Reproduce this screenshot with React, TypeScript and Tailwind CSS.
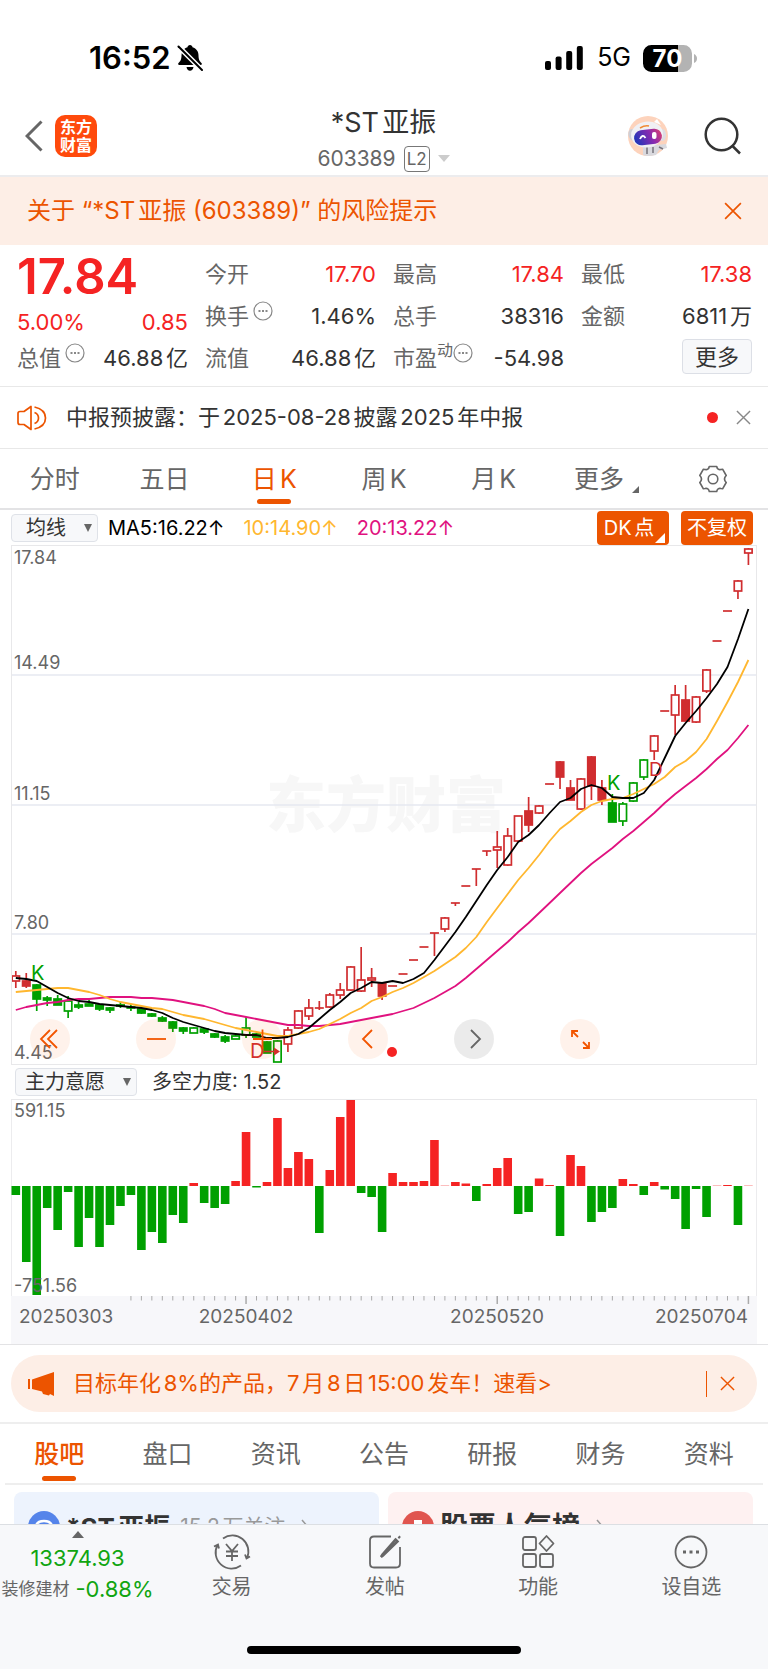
import React, { useState } from 'react';
import { clsx } from 'clsx';

const RED = '#d02d2f';
const GREEN = '#00a000';
const X0 = 15.8;
const STEP = 10.466;

const xAt = (i: number) => X0 + i * STEP;

// kind: r / g hollow, R / G filled, then high, body top, body bottom, low
type Candle = ['r' | 'g' | 'R' | 'G', number, number, number, number];

const candles: Candle[] = [
  ['r', 971, 976, 981, 988], ['R', 973, 981, 986, 988], ['G', 984, 985, 999, 1011], ['G', 996, 998, 1000, 1006],
  ['G', 995, 999, 1005, 1005], ['g', 996, 1001, 1011, 1018], ['G', 1002, 1005, 1007, 1009], ['G', 1000, 1004, 1006, 1006],
  ['G', 1004, 1005, 1009, 1011], ['G', 1007, 1008, 1010, 1013], ['G', 1002, 1005, 1006, 1008], ['G', 1004, 1007, 1008, 1011],
  ['G', 1008, 1009, 1013, 1014], ['G', 1013, 1014, 1016, 1017], ['G', 1016, 1018, 1021, 1022], ['G', 1021, 1022, 1028, 1032],
  ['G', 1027, 1028, 1031, 1034], ['g', 1027, 1028, 1033, 1033], ['G', 1028, 1029, 1032, 1034], ['G', 1033, 1034, 1037, 1038],
  ['G', 1035, 1037, 1041, 1043], ['g', 1035, 1036, 1039, 1039], ['g', 1017, 1028, 1035, 1038], ['G', 1033, 1034, 1037, 1037],
  ['G', 1041, 1042, 1053, 1053], ['g', 1040, 1041, 1062, 1062], ['r', 1027, 1030, 1044, 1052], ['r', 1010, 1011, 1028, 1029],
  ['r', 999, 1008, 1016, 1020], ['r', 1001, 1008, 1008, 1010], ['r', 993, 995, 1007, 1008], ['r', 983, 990, 995, 999],
  ['r', 966, 967, 990, 991], ['r', 947, 980, 991, 992], ['r', 968, 978, 980, 987], ['R', 982, 983, 996, 1000],
  ['r', 986, 986, 986, 986], ['r', 974, 974, 974, 974], ['r', 960, 960, 960, 960], ['r', 947, 947, 947, 947],
  ['r', 933, 933, 933, 956], ['r', 917, 918, 929, 932], ['r', 903, 903, 903, 906], ['r', 886, 886, 886, 886],
  ['r', 869, 869, 869, 886], ['r', 851, 851, 851, 856], ['r', 831, 847, 850, 868], ['r', 828, 836, 865, 866],
  ['r', 816, 816, 841, 842], ['R', 797, 811, 825, 832], ['r', 805, 806, 813, 814], ['r', 784, 784, 784, 784],
  ['R', 761, 762, 777, 789], ['R', 780, 788, 800, 800], ['r', 778, 779, 809, 810], ['R', 756, 757, 786, 800],
  ['R', 780, 788, 800, 805], ['G', 794, 803, 822, 822], ['g', 802, 804, 821, 826], ['g', 782, 783, 801, 802],
  ['g', 759, 760, 777, 780], ['r', 735, 736, 751, 760], ['r', 711, 711, 711, 711], ['r', 685, 695, 715, 735],
  ['R', 685, 700, 721, 721], ['r', 696, 697, 722, 723], ['r', 669, 670, 691, 693], ['r', 641, 641, 641, 641],
  ['r', 611, 611, 611, 611], ['r', 580, 581, 591, 599], ['r', 548, 549, 553, 565],
];

const ma5 = [
  978, 979, 981, 987, 993, 998, 1001, 1002, 1004, 1005, 1006, 1007, 1008, 1010, 1013, 1018, 1022, 1025, 1028, 1031, 1033, 1034, 1035,
  1035, 1038, 1038, 1037, 1034, 1028, 1019, 1010, 1002, 993, 988, 982, 983, 981, 983, 979, 973, 960, 946, 932, 917, 901, 885, 870,
  857, 842, 835, 825, 813, 802, 798, 789, 785, 788, 797, 798, 798, 793, 780, 758, 736, 723, 711, 698, 684, 667, 639, 609,
];

const ma10 = [
  992, 991, 990, 989, 988, 988, 990, 992, 995, 999, 1002, 1004, 1006, 1008, 1009, 1012, 1015, 1017, 1019, 1022, 1025, 1028, 1030,
  1032, 1034, 1036, 1036, 1034, 1032, 1029, 1024, 1019, 1013, 1008, 1001, 997, 992, 988, 983, 977, 971, 964, 957, 948, 937, 922, 908,
  894, 880, 868, 855, 841, 829, 821, 812, 805, 801, 799, 798, 794, 789, 784, 777, 767, 761, 752, 739, 721, 702, 682, 660,
];

const ma20 = [
  1010, 1007, 1005, 1003, 1002, 1000, 999, 999, 998, 997, 997, 997, 998, 998, 999, 1000, 1002, 1004, 1006, 1009, 1013, 1015, 1017,
  1019, 1021, 1023, 1025, 1025, 1026, 1026, 1025, 1024, 1022, 1020, 1018, 1016, 1014, 1011, 1008, 1003, 998, 992, 986, 978, 969, 960,
  951, 942, 932, 923, 913, 903, 893, 883, 873, 864, 856, 848, 839, 831, 822, 813, 803, 794, 786, 778, 769, 759, 750, 738, 725,
];

const flows = [
  -9, -76, -109, -22, -44, -6, -61, -32, -61, -39, -20, -9, -64, -46, -57, -29, -37, 3, -17, -22, -18, 5, 54, -1.5, 4, 68, 18, 34, 27,
  -47, 16, 69, 86, -7, -11, -46, 13, 4, 4, 5, 46, 0.3, 4, 2.5, -15, 2, 18, 28, -28, -26, 7.5, 1, -50, 31, 20, -36, -26, -22, 7, 2,
  -9, 4, -3.5, -13, -43, -3, -31, 0.3, 1, -39, 0.3,
];

const toPoints = (ys: number[]) => ys.map((y, i) => `${xAt(i).toFixed(1)},${y}`).join(' ');

const CandleShape: React.FC<{ data: Candle; index: number }> = ({ data, index }) => {
  const [kind, high, top, bottom, low] = data;
  const color = kind.toLowerCase() === 'r' ? RED : GREEN;
  const filled = kind === 'R' || kind === 'G';
  const x = xAt(index);
  return (
    <g stroke={color} strokeWidth={1.7}>
      {high < top && <line x1={x} x2={x} y1={high} y2={top} />}
      {low > bottom && <line x1={x} x2={x} y1={bottom} y2={low} />}
      {bottom === top ? (
        <line x1={x - 4.5} x2={x + 4.5} y1={top} y2={top} />
      ) : (
        <rect x={x - 3.7} y={top} width={7.4} height={bottom - top} fill={filled ? color : 'white'} />
      )}
    </g>
  );
};

const KLineChart: React.FC = () => (
  <svg viewBox="11 545 746 520" className="block w-full font-[Inter]">
    <text x="386" y="827" textAnchor="middle" fontSize="60" fontWeight="900" fill="#f7f7f7" fontFamily="Noto Sans CJK SC">东方财富</text>
    {[675, 805, 934].map((y) => (
      <line key={y} x1="11" x2="757" y1={y} y2={y} stroke="#e6e9f0" strokeWidth="1.3" />
    ))}
    {candles.map((c, i) => <CandleShape key={i} data={c} index={i} />)}
    <g fill="none" strokeWidth="1.8" strokeLinejoin="round">
      <polyline points={toPoints(ma20)} stroke="#e0127f" />
      <polyline points={toPoints(ma10)} stroke="#ffb72f" />
      <polyline points={toPoints(ma5)} stroke="#000" />
    </g>
    <g fontSize="20">
      <text x="31" y="980" fill={GREEN}>K</text>
      <text x="607" y="790" fill={GREEN}>K</text>
      <text x="250" y="1058" fill={RED}>D</text>
      <text x="649" y="776" fill={RED} fontSize="19">D</text>
    </g>
    <path d="M264 1051.500h14" stroke={RED} strokeWidth="1.500" />
    <path d="M274 1047.500l6 4-6 4z" fill={RED} />
    <g fontSize="18" fill="#666">
      <text x="14" y="564">17.84</text>
      <text x="14" y="669">14.49</text>
      <text x="14" y="800">11.15</text>
      <text x="14" y="929">7.80</text>
      <text x="14" y="1059">4.45</text>
    </g>
  </svg>
);

const FlowChart: React.FC = () => (
  <svg viewBox="11 1100 746 244" className="block w-full font-[Inter]">
    <rect x="11" y="1296" width="746" height="48" fill="#f7f7fa" />
    {flows.map((v, i) => (
      <rect
        key={i}
        x={xAt(i) - 4.3}
        y={v > 0 ? 1186 - v : 1186}
        width="8.6"
        height={Math.abs(v)}
        fill={v > 0 ? '#f52323' : GREEN}
      />
    ))}
    {flows.map((_, i) => {
      if (i < 11) return null;
      const major = i === 22 || i === 46 || i === 70;
      return <line key={i} x1={xAt(i)} x2={xAt(i)} y1="1296" y2={major ? 1304 : 1300.5} stroke="#aaa" strokeWidth={major ? 1.5 : 1} />;
    })}
    <g fontSize="18" fill="#666">
      <text x="14" y="1117">591.15</text>
      <text x="14" y="1292">-751.56</text>
    </g>
    <g fontSize="19" fill="#666">
      <text x="19" y="1323">20250303</text>
      <text x="246" y="1323" textAnchor="middle">20250402</text>
      <text x="497" y="1323" textAnchor="middle">20250520</text>
      <text x="748" y="1323" textAnchor="end">20250704</text>
    </g>
  </svg>
);

const DotsIcon: React.FC = () => (
  <svg viewBox="0 0 20 20" className="h-5 w-5 shrink-0" fill="none" stroke="#888">
    <circle cx="10" cy="10" r="9" strokeWidth="1.2" />
    <path d="M5.500 10h2M9 10h2M12.500 10h2" strokeWidth="1.800" />
  </svg>
);

const CloseIcon: React.FC<{ className: string }> = ({ className }) => (
  <svg viewBox="0 0 16 16" className={className} fill="none" stroke="currentColor" strokeWidth="1.5">
    <path d="M1 1l14 14M15 1L1 15" />
  </svg>
);

const StatusBar: React.FC = () => (
  <div className="flex h-24 items-center justify-between pt-5 pr-[71px] pl-[89px]">
    <div className="flex items-center gap-1.5">
      <span className="text-[31px] font-semibold text-black">16:52</span>
      <svg viewBox="0 0 26 26" className="h-[26px] w-[26px]">
        <path d="M13 0c1.500 0 2.300 1 2.500 2.200 4 1.200 6 4.500 6 8.300 0 4.500 1.500 6 3 7.500.8.800.3 2-.8 2H2.300c-1.100 0-1.600-1.200-.8-2 1.500-1.500 3-3 3-7.500 0-3.800 2-7.100 6-8.300C10.700 1 11.500 0 13 0zM9.500 22h7c-.3 2.300-1.700 3.800-3.500 3.800S9.800 24.300 9.500 22z" />
        <path d="M1.500 1.500L25 25" stroke="#fff" strokeWidth="5" />
        <path d="M1.500 1.500L25 25" stroke="#000" strokeWidth="2" strokeLinecap="round" />
      </svg>
    </div>
    <div className="flex items-center text-black">
      <svg viewBox="0 0 38 24" className="mr-3.5 h-6 w-[38px]">
        <rect y="15" width="6" height="9" rx="2" />
        <rect x="10.600" y="10.500" width="6" height="13.500" rx="2" />
        <rect x="21.200" y="5" width="6" height="19" rx="2" />
        <rect x="31.800" width="6" height="24" rx="2" />
      </svg>
      <span className="mr-3 text-[25px]">5G</span>
      <svg viewBox="0 0 54 27" className="h-[27px] w-[54px]">
        <path d="M8.500 0H35v27H8.500A8.500 8.500 0 0 1 0 18.500v-10A8.500 8.500 0 0 1 8.500 0z" />
        <path d="M35 0h5.500A8.500 8.500 0 0 1 49 8.500v10a8.500 8.500 0 0 1-8.500 8.500H35zM51 9q3 1.500 3 4.500T51 18z" fill="#b3b3b3" />
        <text x="24.500" y="22" textAnchor="middle" fontSize="24" fontWeight="700" fill="#fff">70</text>
      </svg>
    </div>
  </div>
);

const Header: React.FC = () => (
  <header className="grid h-[81px] grid-cols-3 items-center border-b-2 border-[#ececee] pr-[26px] pl-[25px]">
    <div className="flex items-center gap-3">
      <button aria-label="返回">
        <svg viewBox="0 0 18 32" className="h-8 w-[18px]" fill="none" stroke="#666" strokeWidth="3">
          <path d="M16.500 1.500L2 16l14.500 14.500" />
        </svg>
      </button>
      <div className="grid h-[42px] w-[42px] content-center justify-center rounded-[10px] bg-[#ff4a0c] text-center text-[16px] leading-[18px] font-bold text-white">
        <span>东方</span>
        <span>财富</span>
      </div>
    </div>
    <div className="flex flex-col items-center gap-1 pt-1.5">
      <h1 className="text-[27px] leading-9 text-[#333]">*ST亚振</h1>
      <div className="flex items-center gap-2 text-[21px] leading-7 text-[#666]">
        <span>603389</span>
        <span className="rounded-sm border border-[#777] px-0.5 text-[17px] leading-6">L2</span>
        <svg viewBox="0 0 12 7" className="h-[7px] w-3" fill="#ccc">
          <path d="M0 0h12L6 7z" />
        </svg>
      </div>
    </div>
    <div className="flex items-center justify-end gap-9">
      <button aria-label="智能助手">
        <svg viewBox="0 0 40 40" className="h-10 w-10">
          <defs>
            <linearGradient id="visor" x1="0" x2="1" y1="0.200" y2="0">
              <stop offset="0" stopColor="#2a35b8" />
              <stop offset="0.550" stopColor="#8a2ab0" />
              <stop offset="1" stopColor="#e0406a" />
            </linearGradient>
          </defs>
          <circle cx="20" cy="20" r="20" fill="#fdd3bc" />
          <path d="M15 29h13l10-1 1 4-8 2-3 5q-8 2-13 0z" fill="#d9d9de" />
          <path d="M19 31v7M25 31v6M31 31l4 2" stroke="#77747c" strokeWidth="1.500" />
          <path d="M26 6l3-3 4 6z" fill="#fff" />
          <ellipse cx="4.500" cy="19" rx="4" ry="6" fill="#cfcfd6" transform="rotate(-15 4.500 19)" />
          <ellipse cx="34.500" cy="19" rx="3.500" ry="6" fill="#dcdce2" />
          <ellipse cx="19" cy="18.500" rx="16" ry="13" fill="#f0f0f4" transform="rotate(-8 19 18.500)" />
          <rect x="6" y="13.500" width="28" height="15" rx="7.500" fill="url(#visor)" transform="rotate(-7 20 21)" />
          <path d="M12 23q2.500-5.500 5.500-1" fill="none" stroke="#fff" strokeWidth="1.800" />
          <rect x="24" y="16" width="4.500" height="7" rx="2" fill="#fff" />
          <path d="M12 12q5-3 9-2" fill="none" stroke="#f08a35" strokeWidth="1.500" />
        </svg>
      </button>
      <button aria-label="搜索">
        <svg viewBox="0 0 38 38" className="h-[38px] w-[38px]" fill="none" stroke="#333" strokeWidth="2.500">
          <circle cx="17.500" cy="17.500" r="15.800" />
          <path d="M28 28.500l8 8" />
        </svg>
      </button>
    </div>
  </header>
);

interface QuoteItemProps {
  label: string;
  sup?: string;
  value: string;
  red?: boolean;
  dots?: boolean;
}

const QuoteItem: React.FC<QuoteItemProps> = ({ label, sup, value, red, dots }) => (
  <div className="flex h-[42px] items-center justify-between text-[22px] whitespace-nowrap">
    <div className="flex items-center text-[#666]">
      <span>{label}</span>
      {sup && <span className="mb-4 text-base leading-5">{sup}</span>}
      {dots && <span className={clsx('mb-2.5', !sup && 'ml-1')}><DotsIcon /></span>}
    </div>
    <span className={red ? 'text-[#f52323]' : 'text-[#333]'}>{value}</span>
  </div>
);

const Quote: React.FC = () => (
  <section className="grid h-[142px] grid-cols-4 gap-x-[17px] border-b border-[#e8e8e8] pt-2 pr-4 pl-[17px]">
    <div>
      <div className="flex h-12 items-center text-[49px] font-semibold text-[#f52323]">17.84</div>
      <div className="flex h-9 items-center justify-between pt-1.5 text-[22px] text-[#f52323]">
        <span>5.00%</span>
        <span>0.85</span>
      </div>
      <QuoteItem label="总值" value="46.88亿" dots />
    </div>
    <div>
      <QuoteItem label="今开" value="17.70" red />
      <QuoteItem label="换手" value="1.46%" dots />
      <QuoteItem label="流值" value="46.88亿" />
    </div>
    <div>
      <QuoteItem label="最高" value="17.84" red />
      <QuoteItem label="总手" value="38316" />
      <QuoteItem label="市盈" sup="动" value="-54.98" dots />
    </div>
    <div>
      <QuoteItem label="最低" value="17.38" red />
      <QuoteItem label="金额" value="6811万" />
      <div className="flex justify-end pt-0.5">
        <button className="h-[35px] rounded-sm border border-[#dcdfe6] bg-[#f7f8fa] px-3 text-[22px] leading-8 text-[#333]">更多</button>
      </div>
    </div>
  </section>
);

const periods = ['分时', '五日', '日K', '周K', '月K', '更多'];

const PeriodTabs: React.FC = () => {
  const [active, setActive] = useState('日K');
  return (
    <nav className="grid h-[61px] grid-cols-7 border-b-2 border-[#e3e3e5]">
      {periods.map((p) => (
        <button
          key={p}
          onClick={() => setActive(p)}
          className={clsx('relative flex items-center justify-center pt-0.5 text-[25px]', p === active ? 'text-[#ec5400]' : 'text-[#666]')}
        >
          {p}
          {p === '更多' && (
            <svg viewBox="0 0 7 7" className="mt-5 -mr-1.5 ml-2 h-[7px] w-[7px]" fill="#666"><path d="M7 0v7H0z" /></svg>
          )}
          {p === active && <span className="absolute bottom-1 h-[5px] w-[34px] rounded-sm bg-[#ec5400]" />}
        </button>
      ))}
      <button aria-label="设置" className="flex items-center justify-center">
        <svg viewBox="0 0 28 28" className="h-7 w-7" fill="none" stroke="#666" strokeWidth="1.600">
          <path d="M10.300 1.500h7.400q.8 3.800 4.300 3l1.600-.3 3.600 6.300q-3.400 3.500 0 7l-3.600 6.300-1.600-.3q-3.500-.8-4.300 3h-7.400q-.8-3.800-4.300-3l-1.600.3L.8 17.500q3.400-3.500 0-7l3.600-6.300 1.600.3q3.500.8 4.300-3z" strokeLinejoin="round" />
          <circle cx="14" cy="14" r="4.800" />
        </svg>
      </button>
    </nav>
  );
};

const PillSelect: React.FC<{ label: string; value: string; className: string }> = ({ label, value, className }) => (
  <div className={clsx('relative flex h-7 items-center rounded-sm border border-[#dfe2e8] bg-[#f7f8fa]', className)}>
    <select aria-label={label} className="h-full w-full appearance-none bg-transparent text-xl leading-6 text-[#333]">
      <option>{value}</option>
    </select>
    <svg viewBox="0 0 8 8" className="pointer-events-none absolute right-[5px] h-2 w-2" fill="#666"><path d="M0 0h8L4 8z" /></svg>
  </div>
);

const Round: React.FC<{ label: string; d: string; grey?: boolean }> = ({ label, d, grey }) => (
  <button
    aria-label={label}
    className={clsx('h-10 w-10 rounded-full', grey ? 'bg-black/8 text-[#666]' : 'bg-[#ff5a00]/8 text-[#f25500]')}
  >
    <svg viewBox="0 0 40 40" className="h-10 w-10" fill="none" stroke="currentColor" strokeWidth="1.800">
      <path d={d} />
    </svg>
  </button>
);

const infoTabs = ['股吧', '盘口', '资讯', '公告', '研报', '财务', '资料'];

const InfoTabs: React.FC = () => {
  const [active, setActive] = useState('股吧');
  return (
    <nav className="mx-[5px] grid h-[61px] grid-cols-7 border-b-2 border-[#eee]">
      {infoTabs.map((t) => (
        <button
          key={t}
          onClick={() => setActive(t)}
          className={clsx('relative flex items-center justify-center pt-0.5 text-[25px]', t === active ? 'font-medium text-[#ec5400]' : 'text-[#666]')}
        >
          {t}
          {t === active && <span className="absolute bottom-0.5 h-[5px] w-[34px] rounded-sm bg-[#ec5400]" />}
        </button>
      ))}
    </nav>
  );
};

const NavItem: React.FC<{ label: string; children: React.ReactNode }> = ({ label, children }) => (
  <button className="flex flex-1 flex-col items-center pt-2 text-xl leading-8 text-[#666]">
    <svg viewBox="0 0 38 38" className="h-[38px] w-[38px]" fill="none" stroke="#666" strokeWidth="1.800">{children}</svg>
    {label}
  </button>
);

const App: React.FC = () => (
  <div className="w-full overflow-hidden bg-white font-[Inter,'Noto_Sans_CJK_SC',sans-serif] [text-autospace:normal]">
    <StatusBar />
    <Header />

    <div className="flex h-[68px] items-center justify-between bg-[#fdeee6] pr-[26px] pl-[27px] text-2xl text-[#ec5400]">
      <span>关于 “*ST亚振 (603389)” 的风险提示</span>
      <button aria-label="关闭"><CloseIcon className="h-[18px] w-[18px]" /></button>
    </div>

    <Quote />

    <div className="flex h-[62px] items-center border-b border-[#e8e8e8] pr-[17px] pl-[17px]">
      <svg viewBox="0 0 30 26" className="h-[26px] w-[30px]" fill="none" stroke="#ec5400" strokeWidth="1.700">
        <path d="M14 1.500v23L7 19.500H3Q1 19.500 1 17.500v-9q0-2 2-2h4z" strokeLinejoin="round" />
        <path d="M17.500 7.500q4 1.500 4 5.500t-4 5.500M17.500 2q11 2.500 11 11t-11 11" />
      </svg>
      <span className="ml-[19px] flex-1 text-[22px] text-[#333]">中报预披露：于2025-08-28披露2025年中报</span>
      <span className="h-[11px] w-[11px] rounded-full bg-[#f52323]" />
      <button aria-label="关闭公告" className="ml-[18px] text-[#888]"><CloseIcon className="h-[15px] w-[15px]" /></button>
    </div>

    <PeriodTabs />

    <div className="flex h-[35px] items-center pr-[15px] pl-[11px] text-xl">
      <PillSelect label="指标" value="均线" className="w-[87px] pl-[14px]" />
      <span className="ml-[10px] text-black">MA5:16.22↑</span>
      <span className="ml-[19px] text-[#ffb72f]">10:14.90↑</span>
      <span className="ml-[19px] text-[#e0127f]">20:13.22↑</span>
      <div className="ml-auto flex gap-3 text-white">
        <button className="relative h-[34px] w-[72px] rounded-sm bg-[#ec5400] pr-2">
          DK点
          <svg viewBox="0 0 10 10" className="absolute right-1 bottom-0.5 h-[10px] w-[10px]" fill="#fff"><path d="M10 0v10H0z" /></svg>
        </button>
        <button className="h-[34px] w-[72px] rounded-sm bg-[#ec5400]">不复权</button>
      </div>
    </div>

    <div className="relative mx-[11px] outline-1 -outline-offset-1 outline-[#e8e8ea]">
      <KLineChart />
      <div className="absolute bottom-[6px] left-[19px] flex gap-[66px]">
        <Round label="最早" d="M20 11l-9 9 9 9M27 11l-9 9 9 9" />
        <Round label="缩小" d="M11 20h19" />
        <Round label="放大" d="M11 20h19M20.500 10.500v19" />
        <div className="relative h-10">
          <Round label="向前" d="M24 11l-9 9 9 9" />
          <span className="absolute -right-[9px] bottom-0.5 h-[10px] w-[10px] rounded-full bg-[#f52323]" />
        </div>
        <Round label="向后" d="M17 11l9 9-9 9" grey />
        <Round label="全屏" d="M12 18v-6h6M12 12l6 6M29 23v6h-6M29 29l-6-6" />
      </div>
    </div>

    <div className="flex h-[34px] items-center pl-[15px] text-xl text-[#333]">
      <PillSelect label="副图指标" value="主力意愿" className="w-[122px] pl-[9px]" />
      <span className="ml-[15px]">多空力度: 1.52</span>
    </div>
    <div className="mx-[11px] border-t border-[#e8e8ea] shadow-[inset_1px_0_#ececee,inset_-1px_0_#ececee]">
      <FlowChart />
    </div>

    <div className="border-t border-b-2 border-t-[#e3e3e5] border-b-[#eee] px-[11px] py-[10px]">
      <div className="flex h-[57px] items-center rounded-full bg-[#fdeee6] pr-[22px] pl-[17px] text-[22px] text-[#ec5400]">
        <svg viewBox="0 0 27 24" className="h-6 w-[27px]" fill="currentColor">
          <path d="M0 7h2v10H0zM4 7.500L26 0v24l-4-2-1 1.500-6-1.500-1-2.500-10-2.500z" />
        </svg>
        <span className="ml-[18px] flex-1">目标年化8%的产品，7月8日15:00发车！速看&gt;</span>
        <span className="h-[26px] w-px bg-[#ec5400]" />
        <button aria-label="关闭推广" className="ml-[13px]"><CloseIcon className="h-[15px] w-[15px]" /></button>
      </div>
    </div>

    <InfoTabs />

    <div className="grid h-[39px] grid-cols-2 gap-[9px] overflow-hidden pt-[7px] pr-[15px] pl-[14px]">
      <a href="#bar" className="flex h-[70px] items-center rounded-lg bg-[#edf3fd] pl-[14px] whitespace-nowrap">
        <svg viewBox="0 0 32 32" className="h-8 w-8" fill="none">
          <circle cx="16" cy="16" r="16" fill="#5584ea" />
          <path d="M8 15q1-5 8-5t8 5v8H8zM12 15h8" stroke="#fff" strokeWidth="2.500" />
        </svg>
        <span className="ml-1.5 text-[26px] font-bold text-[#333]">*ST亚振</span>
        <span className="ml-[10px] text-[21px] text-[#999]">15.2万关注</span>
        <svg viewBox="0 0 8 16" className="ml-4 h-4 w-2" fill="none" stroke="#999" strokeWidth="1.500"><path d="M1 1l6 7-6 7" /></svg>
      </a>
      <a href="#rank" className="flex h-[70px] items-center rounded-lg bg-[#fef1f1] pl-[14px] whitespace-nowrap">
        <svg viewBox="0 0 32 32" className="h-8 w-8">
          <circle cx="16" cy="16" r="16" fill="#e0554f" />
          <path d="M12 9h8v5h5v10H7V14h5z" fill="#fff" />
        </svg>
        <span className="ml-1.5 text-[28px] font-bold text-[#333]">股票人气榜</span>
        <svg viewBox="0 0 8 16" className="ml-4 h-4 w-2" fill="none" stroke="#999" strokeWidth="1.500"><path d="M1 1l6 7-6 7" /></svg>
      </a>
    </div>

    <footer className="h-[145px] border-t border-[#dcdfe3] bg-[#f7f8fa]">
      <div className="flex h-[121px]">
        <button className="flex w-[155px] shrink-0 flex-col items-center pt-[6px] whitespace-nowrap">
          <svg viewBox="0 0 12 7" className="h-[7px] w-3" fill="#666"><path d="M6 0l6 7H0z" /></svg>
          <span className="mt-1 text-[22px] leading-8 text-[#11a511]">13374.93</span>
          <span className="flex items-center gap-1.5 text-[17px] leading-[30px] text-[#666]">
            装修建材 <span className="text-[22px] text-[#11a511]">-0.88%</span>
          </span>
        </button>
        <NavItem label="交易">
          <path d="M10 5.500A16 16 0 0 1 34 25M28 32.500A16 16 0 0 1 4.500 12M1 13.500l4-2 1 4M37 23.500l-3.500 2-1.500-4" />
          <path d="M13 11l6 7 6-7M19 18v10M13 18.500h12M13 23h12" />
        </NavItem>
        <NavItem label="发帖">
          <path d="M25 3.500H8q-4 0-4 4v23q0 4 4 4h22q4 0 4-4V14" />
          <path d="M29.500 6.500l2 2L17 22.500l-2 1.500 1.500-2.500zM32.500 3.500l1.500 1.500" strokeWidth="2.500" />
        </NavItem>
        <NavItem label="功能">
          <rect x="4" y="4" width="13" height="13" rx="2" />
          <rect x="4" y="21" width="13" height="13" rx="2" />
          <rect x="21" y="21" width="13" height="13" rx="2" />
          <path d="M27.500 3l7 7.500-7 7.500-7-7.500z" strokeLinejoin="round" />
        </NavItem>
        <NavItem label="设自选">
          <circle cx="19" cy="19" r="15.500" />
          <path d="M11 19h3M17.500 19h3M24 19h3" strokeWidth="3" />
        </NavItem>
      </div>
      <div className="mx-auto h-2 w-[274px] rounded-full bg-black" />
    </footer>
  </div>
);

export default App;
